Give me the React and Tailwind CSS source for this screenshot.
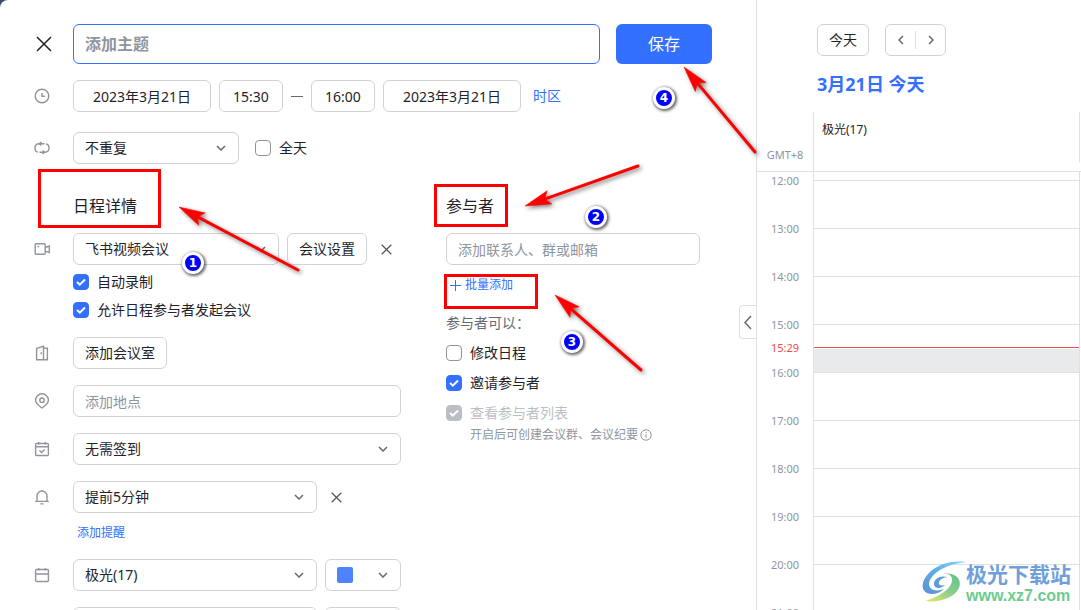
import { useState } from "react";
import clsx from "clsx";

const HOURS = ["12:00", "13:00", "14:00", "15:00", "16:00", "17:00", "18:00", "19:00", "20:00", "21:00"];

const FIELD = "h-8 rounded-md border border-[#d0d3d6] bg-white text-sm text-[#1f2329]";

const ICONS = {
  clock: (
    <>
      <circle cx="8" cy="8" r="6.8" />
      <path d="M8 5v3.300h2.800" />
    </>
  ),
  repeat: (
    <>
      <path d="M10.500 3.800H4.800a3.800 3.800 0 0 0-3.800 3.800v.8a3.800 3.800 0 0 0 3 3.700" />
      <path d="M5.500 12.200h5.700a3.800 3.800 0 0 0 3.800-3.800v-.8a3.800 3.800 0 0 0-3-3.700" />
      <path d="M7.400 2 5.400 3.800l2 1.700M8.600 10.500l2 1.700-2 1.800" />
    </>
  ),
  video: (
    <>
      <rect x="1.200" y="2.700" width="10" height="10.600" rx="1" />
      <path d="M11.200 6.500 15.300 5v6.600l-4.100-1.500M3.600 5.500h1.600" />
    </>
  ),
  door: (
    <>
      <path d="M2.600 3.300 9.500 1.300v13.400H2.600zM9.500 3.300h3.900v11.400H9.500" />
      <path d="M7.200 7.300v2" />
    </>
  ),
  pin: (
    <>
      <path d="M8 15C4.200 12.300 1.600 10 1.600 7.200a6.400 6.400 0 0 1 12.800 0C14.400 10 11.800 12.300 8 15z" />
      <circle cx="8" cy="7.200" r="2.200" />
    </>
  ),
  checkin: (
    <>
      <rect x="1.600" y="2.500" width="12.800" height="12" rx="1" />
      <path d="M1.600 5.700h12.800M4.700 1v2.500M11.300 1v2.500M5.500 9.600l2 2 3.200-3.200" />
    </>
  ),
  bell: (
    <>
      <path d="M3 12.300V7a5 5 0 0 1 10 0v5.300M1.200 12.400h13.600M6.300 14.900h3.400M8 2.200V1" />
    </>
  ),
  calendar: (
    <>
      <rect x="1.600" y="2.500" width="12.800" height="12" rx="1" />
      <path d="M1.600 7h12.800M4.700 1v2.500M11.300 1v2.500" />
    </>
  ),
};

function RowIcon({ name }) {
  return (
    <span className="flex h-8 w-[39px] shrink-0 items-center">
      {name && (
        <svg viewBox="0 0 16 16" className="size-4 fill-none stroke-[#8f959e] stroke-[1.4]">
          {ICONS[name]}
        </svg>
      )}
    </span>
  );
}

function Cross({ className }) {
  return (
    <svg viewBox="0 0 16 16" className={clsx("fill-none", className)}>
      <path d="M1 1l14 14M15 1L1 15" />
    </svg>
  );
}

function Chevron({ d = "M1 1l4 4 4-4", box = "0 0 10 6", className = "h-1.5 w-2.5" }) {
  return (
    <svg viewBox={box} className={clsx("fill-none stroke-[#646a73] stroke-[1.5]", className)}>
      <path d={d} />
    </svg>
  );
}

function Select({ label, value, className, children }) {
  return (
    <span className={clsx("grid items-center", className)}>
      <select aria-label={label} className={clsx(FIELD, "col-start-1 row-start-1 w-full appearance-none pl-[11px] pr-8")}>
        <option>{value}</option>
      </select>
      {children}
      <span className="pointer-events-none col-start-1 row-start-1 mr-[13px] justify-self-end">
        <Chevron />
      </span>
    </span>
  );
}

function Checkbox({ label, checked = false, disabled = false }) {
  const [on, setOn] = useState(checked);
  return (
    <label className={clsx("flex h-5 items-center gap-2 text-sm", disabled ? "text-[#bbbfc4]" : "text-[#1f2329]")}>
      <span className="grid size-4">
        <input
          type="checkbox"
          checked={on}
          disabled={disabled}
          onChange={() => setOn(!on)}
          className="col-start-1 row-start-1 size-4 appearance-none rounded border border-[#8f959e] bg-white checked:border-[#3370ff] checked:bg-[#3370ff] disabled:border-[#bbbfc4] disabled:bg-[#bbbfc4]"
        />
        {on && (
          <svg viewBox="0 0 16 16" className="pointer-events-none col-start-1 row-start-1 size-4 fill-none stroke-white stroke-2">
            <path d="M4 8l2.800 2.700L12 5.500" />
          </svg>
        )}
      </span>
      {label}
    </label>
  );
}

function EventForm() {
  return (
    <main className="relative flex-1 overflow-hidden rounded-tl-lg bg-white pl-[34px] pr-11 pt-6">
      <div className="flex items-center">
        <button aria-label="关闭" className="w-[39px] shrink-0 pl-0.5">
          <Cross className="size-4 stroke-[#1f2329] stroke-[1.5]" />
        </button>
        <input
          aria-label="添加主题"
          placeholder="添加主题"
          className="h-10 min-w-0 flex-1 rounded-md border border-[#3370ff] px-[11px] text-base font-bold outline-none placeholder:text-[#8f959e]"
        />
        <button className="ml-4 h-10 w-24 rounded-md bg-[#3370ff] text-base text-white">保存</button>
      </div>

      <div className="mt-4 flex items-center">
        <RowIcon name="clock" />
        <div className="flex items-center gap-2">
          <input aria-label="开始日期" defaultValue="2023年3月21日" className={clsx(FIELD, "w-[138px] text-center")} />
          <input aria-label="开始时间" defaultValue="15:30" className={clsx(FIELD, "w-16 text-center")} />
          <span className="h-px w-3 bg-[#646a73]" />
          <input aria-label="结束时间" defaultValue="16:00" className={clsx(FIELD, "w-16 text-center")} />
          <input aria-label="结束日期" defaultValue="2023年3月21日" className={clsx(FIELD, "w-[138px] text-center")} />
          <a href="#timezone" className="ml-1 text-sm text-[#3370ff]">时区</a>
        </div>
      </div>

      <div className="mt-5 flex items-center">
        <RowIcon name="repeat" />
        <Select label="重复" value="不重复" className="mr-4 w-[166px]" />
        <Checkbox label="全天" />
      </div>

      <div className="mt-[30px] flex gap-[45px]">
        <section className="w-[367px] shrink-0">
          <h2 className="pl-[39px] text-base leading-6 text-[#1f2329]">日程详情</h2>
          <div className="mt-[15px] flex items-center">
            <RowIcon name="video" />
            <Select label="会议类型" value="飞书视频会议" className="w-[206px]" />
            <button className={clsx(FIELD, "ml-2 w-20 shrink-0")}>会议设置</button>
            <button aria-label="移除会议" className="ml-3.5">
              <Cross className="size-[11px] stroke-[#51565d] stroke-[1.8]" />
            </button>
          </div>
          <div className="mt-[7px] flex flex-col gap-2 pl-[39px]">
            <Checkbox label="自动录制" checked />
            <Checkbox label="允许日程参与者发起会议" checked />
          </div>
          <div className="mt-[17px] flex flex-col gap-4">
            <div className="flex">
              <RowIcon name="door" />
              <button className={clsx(FIELD, "px-[11px]")}>添加会议室</button>
            </div>
            <div className="flex">
              <RowIcon name="pin" />
              <input aria-label="添加地点" placeholder="添加地点" className={clsx(FIELD, "min-w-0 flex-1 px-[11px] placeholder:text-[#8f959e]")} />
            </div>
            <div className="flex">
              <RowIcon name="checkin" />
              <Select label="签到" value="无需签到" className="flex-1" />
            </div>
            <div className="flex items-center">
              <RowIcon name="bell" />
              <Select label="提醒" value="提前5分钟" className="w-[244px]" />
              <button aria-label="移除提醒" className="ml-3.5">
                <Cross className="size-[11px] stroke-[#51565d] stroke-[1.8]" />
              </button>
            </div>
          </div>
          <a href="#reminder" className="ml-[43px] mt-2.5 block text-xs leading-5 text-[#3370ff]">添加提醒</a>
          <div className="mt-4 flex flex-col gap-4">
            <div className="flex">
              <RowIcon name="calendar" />
              <Select label="日历" value="极光(17)" className="mr-2 w-[244px]" />
              <Select label="颜色" value="" className="flex-1">
                <span className="pointer-events-none col-start-1 row-start-1 ml-3 size-4 rounded-xs bg-[#4e83fd]" />
              </Select>
            </div>
            <div className="flex">
              <RowIcon />
              <Select label="忙闲状态" value="" className="mr-2 w-[244px]" />
              <Select label="公开范围" value="" className="flex-1" />
            </div>
          </div>
        </section>

        <section className="w-[254px]">
          <h2 className="text-base leading-6 text-[#1f2329]">参与者</h2>
          <input
            aria-label="添加参与者"
            placeholder="添加联系人、群或邮箱"
            className={clsx(FIELD, "mt-[15px] w-full px-[11px] placeholder:text-[#8f959e]")}
          />
          <button className="ml-1 mt-2.5 flex h-5 items-center gap-1 text-xs text-[#3370ff]">
            <svg viewBox="0 0 11 11" className="size-[11px] fill-none stroke-[#3370ff]">
              <path d="M5.500 0v11M0 5.500h11" />
            </svg>
            批量添加
          </button>
          <p className="mt-[18px] text-sm leading-5 text-[#646a73]">参与者可以：</p>
          <div className="mt-2.5 flex flex-col gap-2.5">
            <Checkbox label="修改日程" />
            <Checkbox label="邀请参与者" checked />
            <Checkbox label="查看参与者列表" checked disabled />
          </div>
          <p className="mt-0.5 flex items-center gap-0.5 pl-6 text-xs leading-5 text-[#8f959e]">
            开启后可创建会议群、会议纪要
            <svg viewBox="0 0 12 12" className="size-3 fill-none stroke-[#8f959e]">
              <circle cx="6" cy="6" r="5.200" />
              <path d="M6 3v1.200M6 5.200v3.600" />
            </svg>
          </p>
        </section>
      </div>

      <button
        aria-label="收起"
        className="absolute right-0 top-[305px] flex h-[34px] w-[17px] items-center justify-center rounded-l border border-r-0 border-[#dee0e3] bg-white"
      >
        <Chevron d="M7 1L1 7.500 7 14" box="0 0 8 15" className="h-[15px] w-2" />
      </button>
    </main>
  );
}

function DayView() {
  return (
    <aside className="flex w-[325px] shrink-0 flex-col border-l border-[#dee0e3] bg-white pt-6">
      <div className="flex gap-4 pl-[60px]">
        <button className={clsx(FIELD, "w-[52px]")}>今天</button>
        <div className={clsx(FIELD, "flex w-[61px] items-center")}>
          <button aria-label="前一天" className="flex flex-1 justify-center">
            <Chevron d="M5 1L1 5l4 4" box="0 0 6 10" className="h-2.5 w-1.5" />
          </button>
          <span className="h-[18px] w-px bg-[#dee0e3]" />
          <button aria-label="后一天" className="flex flex-1 justify-center">
            <Chevron d="M1 1l4 4-4 4" box="0 0 6 10" className="h-2.5 w-1.5" />
          </button>
        </div>
      </div>
      <h1 className="mt-4 pl-[60px] text-lg font-bold leading-6 text-[#3370ff]">3月21日 今天</h1>

      <div className="mt-4 flex h-[60px] shrink-0 border-b border-[#dee0e3]">
        <div className="flex w-14 items-end justify-center pb-2 text-[11px] leading-4 text-[#8f959e]">GMT+8</div>
        <div className="flex-1 border-l border-[#dee0e3] pr-px">
          <div className="h-[50px] border-r border-[#dee0e3] pl-2 pt-2 text-xs leading-5 text-[#1f2329]">极光(17)</div>
        </div>
      </div>

      <div className="flex min-h-0 flex-1 overflow-hidden">
        <div className="relative flex w-14 flex-col gap-8 pt-px text-center text-[11px] leading-4 text-[#8f959e]">
          {HOURS.map((hour) => (
            <span key={hour}>{hour}</span>
          ))}
          <span className="absolute inset-x-0 top-[168px] text-[#f54a45]">15:29</span>
        </div>
        <div className="mr-px flex-1 border-x border-[#dee0e3] pt-2">
          {HOURS.map((hour) => (
            <div key={hour} className="flex h-12 flex-col justify-end border-t border-[#dee0e3]">
              {hour === "15:00" && (
                <>
                  <div className="mb-px h-px bg-[#e5504b]" />
                  <div className="h-[23px] bg-[#e9eaec]" />
                </>
              )}
            </div>
          ))}
        </div>
      </div>
    </aside>
  );
}

const BOXES = [
  "left-[38px] top-[169px] h-[59px] w-[123px]",
  "left-[434px] top-[184px] h-[43px] w-[74px]",
  "left-[444px] top-[274px] h-[35px] w-[94px]",
];

const BADGES = [
  "left-[182px] top-[252px]",
  "left-[585px] top-[206px]",
  "left-[561px] top-[331px]",
  "left-[653px] top-[87px]",
];

// tip x, tip y, tail x, tail y
const ARROWS = [
  [179, 207, 298, 270],
  [525, 206, 638, 166],
  [555, 295, 641, 370],
  [684, 67, 755, 152],
];

function Annotations() {
  return (
    <div className="pointer-events-none absolute inset-0 overflow-hidden">
      {BOXES.map((place) => (
        <div key={place} className={clsx("absolute border-3 border-[#ff0000]", place)} />
      ))}
      <svg width="1081" height="610" className="absolute left-0 top-0 drop-shadow-[2px_2px_2px_rgba(0,0,0,0.5)]">
        {ARROWS.map(([x1, y1, x2, y2]) => {
          const angle = (Math.atan2(y2 - y1, x2 - x1) * 180) / Math.PI;
          return (
            <g key={x1} transform={`translate(${x1} ${y1}) rotate(${angle})`} fill="#ff0000" stroke="#ff0000">
              <path d="M0 0L26 -7L21 0L26 7Z" strokeWidth="0.5" />
              <path d={`M20 0H${Math.hypot(x2 - x1, y2 - y1)}`} strokeWidth="3" strokeLinecap="round" />
            </g>
          );
        })}
      </svg>
      {BADGES.map((place, i) => (
        <span
          key={place}
          className={clsx(
            "absolute flex size-[22px] items-center justify-center rounded-full border-3 border-white bg-[#0000ff] font-['DejaVu_Sans',sans-serif] text-xs font-bold text-white shadow-[1px_1px_3px_1px_rgba(0,0,0,0.6)]",
            place
          )}
        >
          {i + 1}
        </span>
      ))}
    </div>
  );
}

function Watermark() {
  return (
    <div className="pointer-events-none absolute bottom-1.5 right-2.5 flex items-center">
      <svg viewBox="0 0 44 42" className="h-[42px] w-11">
        <defs>
          <linearGradient id="swoosh-top" x1="0" y1="1" x2="1" y2="0">
            <stop offset="0" stopColor="#5b8fd0" />
            <stop offset="0.600" stopColor="#62b5ec" />
            <stop offset="1" stopColor="#8fd3f4" />
          </linearGradient>
          <linearGradient id="swoosh-bottom" x1="0" y1="1" x2="1" y2="0">
            <stop offset="0" stopColor="#e6ea6a" />
            <stop offset="0.500" stopColor="#8ed08a" />
            <stop offset="1" stopColor="#5cc08c" />
          </linearGradient>
        </defs>
        <path
          d="M44 1C30 -1 15 3 6 13C-1 21 -1 29 5 32C10 34 17 33 22 28C14 31 7 29 7 23C8 14 20 4 44 1Z"
          fill="url(#swoosh-top)"
        />
        <path
          d="M25 16C18 14 12 18 12 23C12 28 19 28 23 24C19 25 16 24 17 21C18 18 21 17 25 16Z"
          fill="#5f9bd6"
        />
        <path
          d="M17 14C25 11 31 14 30 20C29 28 17 36 3 40C18 42 33 36 37 27C41 17 31 9 17 14Z"
          fill="url(#swoosh-bottom)"
        />
      </svg>
      <div>
        <div className="text-[21px] font-bold leading-7 text-[#6f9fdb]">极光下载站</div>
        <div className="font-['Liberation_Sans',sans-serif] text-base font-bold leading-4 text-[#6ccb90]">www.xz7.com</div>
      </div>
    </div>
  );
}

export default function App() {
  return (
    <div className="relative flex h-screen overflow-hidden bg-[#3d486b] font-['Noto_Sans','Noto_Sans_CJK_SC',sans-serif]">
      <EventForm />
      <DayView />
      <Watermark />
      <Annotations />
    </div>
  );
}
